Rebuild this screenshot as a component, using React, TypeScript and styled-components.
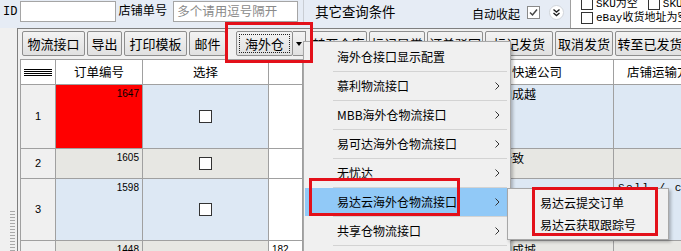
import React from "react";
import styled, { createGlobalStyle } from "styled-components";

const CJK = `"Noto Sans CJK SC", "Noto Sans", "Liberation Sans", sans-serif`;

const GlobalStyle = createGlobalStyle`
  html, body { margin: 0; padding: 0; background: #fff; overflow: hidden; }
  body { font-family: ${CJK}; font-size: 12px; color: #000; }
  * { box-sizing: border-box; }
`;

const Root = styled.div`
  position: relative;
  width: 681px;
  height: 251px;
  overflow: hidden;
  display: flex;
  flex-direction: column;
  background: #f0f0f0;
`;

/* ---------- top search bar ---------- */
const TopBar = styled.div`
  height: 28px;
  flex: none;
  display: flex;
  align-items: flex-start;
  background: #e6ecf5;
`;

const IdLabel = styled.span`
  font-family: "Liberation Mono", monospace;
  font-size: 12px;
  line-height: 1;
  padding: 6px 0 0 3px;
`;

const TextBox = styled.div<{ $w: number; $ml: number }>`
  width: ${(p) => p.$w}px;
  height: 21px;
  margin: 1px 0 0 ${(p) => p.$ml}px;
  background: #fff;
  border: 1px solid #a5a5a5;
  display: flex;
  align-items: center;
  padding-left: 3px;
  color: #8a8a8a;
  font-size: 12.5px;
  line-height: 1;
  white-space: nowrap;
  overflow: hidden;
`;

const BarLabel = styled.span<{ $ml: number; $fs: number }>`
  margin-left: ${(p) => p.$ml}px;
  padding-top: 4px;
  font-size: ${(p) => p.$fs}px;
  line-height: 1.1;
  white-space: nowrap;
`;

const BarSep = styled.div`
  width: 1px;
  height: 24px;
  margin-left: 5px;
  background: #c9cdd3;
`;

const AutoGroup = styled.div`
  margin-left: auto;
  display: flex;
  align-items: center;
  gap: 0;
  height: 24px;
`;

const Spacer = styled.div<{ $w: number }>`
  width: ${(p) => p.$w}px;
  flex: none;
`;

const CheckBoxBox = styled.div<{ $size: number; $border: string }>`
  width: ${(p) => p.$size}px;
  height: ${(p) => p.$size}px;
  flex: none;
  border: 1px solid ${(p) => p.$border};
  background: #fff;
  display: flex;
  align-items: center;
  justify-content: center;
`;

const TopRight = styled.div`
  width: 111px;
  height: 28px;
  margin-left: 6px;
  background: #fff;
  border-left: 1px solid #a0a0a0;
  overflow: hidden;
  flex: none;
`;

const TopRightRows = styled.div`
  margin-top: -3px;
  display: flex;
  flex-direction: column;
`;

const TopRightRow = styled.div`
  height: 14px;
  display: flex;
  align-items: center;
  padding-left: 10px;
  white-space: nowrap;
`;

const OptText = styled.span<{ $mr?: number }>`
  margin-left: 3px;
  margin-right: ${(p) => p.$mr ?? 0}px;
  font-family: "Liberation Mono", "Noto Sans CJK SC", monospace;
  font-size: 11px;
  line-height: 1;
`;

/* ---------- main ---------- */
const Main = styled.div`
  flex: 1;
  display: flex;
  min-height: 0;
`;

const LeftStrip = styled.div`
  width: 17px;
  flex: none;
  background: #f0f0f0;
  display: flex;
  flex-direction: column;
  align-items: flex-end;
  padding-right: 2px;
`;

const Grip = styled.div`
  width: 5px;
  height: 60px;
  margin-top: 182px;
  background-image: radial-gradient(circle, #a9a9a9 45%, transparent 50%);
  background-size: 2.5px 3px;
`;

const Panel = styled.div`
  flex: 1;
  min-width: 0;
  display: flex;
  flex-direction: column;
  border-top: 1px solid #7f7f7f;
  border-left: 1px solid #7f7f7f;
  background: #f0f0f0;
  padding-left: 2px;
`;

const Toolbar = styled.div`
  height: 30px;
  flex: none;
  display: flex;
  gap: 2px;
  padding: 2px 0 0 2px;
`;

const ToolButton = styled.div<{ $w: number; $ml?: number }>`
  width: ${(p) => p.$w}px;
  height: 25px;
  flex: none;
  margin-left: ${(p) => p.$ml ?? 0}px;
  display: flex;
  align-items: center;
  justify-content: center;
  border: 1px solid #8e8e8e;
  border-radius: 2px;
  background: linear-gradient(#f3f3f3, #e0e0e0);
  font-family: ${CJK};
  font-size: 13px;
  line-height: 1;
  white-space: nowrap;
`;

const SplitGroup = styled.div`
  display: flex;
  margin-left: 8px;
`;

const FocusRect = styled.span`
  display: flex;
  align-items: center;
  justify-content: center;
  width: 51px;
  height: 19px;
  border: 1px dotted #222;
`;

const ArrowPart = styled.div`
  width: 13px;
  height: 25px;
  border: 1px solid #8e8e8e;
  border-left: none;
  background: linear-gradient(#f3f3f3, #e0e0e0);
  display: flex;
  align-items: center;
  justify-content: center;
`;

const DownTri = styled.span`
  width: 0;
  height: 0;
  border-left: 3.5px solid transparent;
  border-right: 3.5px solid transparent;
  border-top: 4px solid #000;
`;

/* ---------- grid ---------- */
const Grid = styled.div`
  display: grid;
  grid-template-columns: 35px 87px 126px 34px 158px 153px 110px;
  grid-template-rows: 25px 64px 30px 62px 40px;
  border-top: 1px solid #a0a0a0;
  border-left: 1px solid #a0a0a0;
  background: #fff;
`;

type HAlign = "left" | "center" | "right";
const Cell = styled.div<{ $bg?: string; $h?: HAlign; $top?: boolean }>`
  border-right: 1px solid #a0a0a0;
  border-bottom: 1px solid #a0a0a0;
  background: ${(p) => p.$bg ?? "#fff"};
  display: flex;
  justify-content: ${(p) =>
    p.$h === "left" ? "flex-start" : p.$h === "right" ? "flex-end" : "center"};
  align-items: ${(p) => (p.$top ? "flex-start" : "center")};
  padding: 2px 3px;
  overflow: hidden;
  white-space: nowrap;
  font-size: 12px;
  line-height: 1.1;
`;

const HeadText = styled.span<{ $ml?: number }>`
  font-size: 12.5px;
  margin-left: ${(p) => p.$ml ?? 0}px;
`;

const NumText = styled.span`
  font-family: "Liberation Sans", sans-serif;
  font-size: 10px;
  line-height: 1;
  padding-top: 2px;
`;

const RowNum = styled.span`
  font-family: "Liberation Sans", sans-serif;
  font-size: 11px;
`;

const LinesIcon = styled.div`
  width: 28px;
  height: 7px;
  background: repeating-linear-gradient(#000 0 1px, #777 1px 1.5px, transparent 1.5px 2px);
`;

const MonoText = styled.span`
  font-family: "Liberation Mono", monospace;
  font-size: 11px;
  letter-spacing: 1.5px;
  padding: 1px 0 0 1px;
`;

/* ---------- popup menus ---------- */
const Menu = styled.div`
  position: absolute;
  left: 303px;
  top: 41px;
  width: 208px;
  background: #f0f0f0;
  border: 1px solid #a7a7a7;
  padding: 1px;
  box-shadow: 2px 2px 3px rgba(0, 0, 0, 0.25);
  font-family: ${CJK};
  font-size: 12px;
`;

const MenuItem = styled.div<{ $active?: boolean }>`
  height: 28px;
  display: flex;
  align-items: center;
  padding: 0 9px 0 32px;
  background: ${(p) => (p.$active ? "#91c9f7" : "transparent")};
  white-space: nowrap;
  line-height: 1;
`;

const MenuLabel = styled.span`
  flex: 1;
`;

const MenuSep = styled.div`
  height: 1px;
  margin: 0 2px 0 28px;
  background: #d3d3d3;
`;

const SubMenu = styled.div`
  position: absolute;
  left: 507px;
  top: 188px;
  width: 162px;
  padding: 3px 0;
  background: #f0f0f0;
  border: 1px solid #a7a7a7;
  box-shadow: 2px 2px 3px rgba(0, 0, 0, 0.25);
  font-family: ${CJK};
  font-size: 12px;
`;

const SubItem = styled.div`
  height: 22px;
  display: flex;
  align-items: center;
  padding-left: 32px;
  line-height: 1;
  white-space: nowrap;
`;

const RedBox = styled.div<{ $x: number; $y: number; $w: number; $h: number }>`
  position: absolute;
  left: ${(p) => p.$x}px;
  top: ${(p) => p.$y}px;
  width: ${(p) => p.$w}px;
  height: ${(p) => p.$h}px;
  border: 3px solid #e3101a;
  pointer-events: none;
`;

/* ---------- small drawings ---------- */
const Chevron = () => (
  <svg width="5" height="8" viewBox="0 0 5 8">
    <polyline points="0.5,0.5 4,4 0.5,7.5" fill="none" stroke="#333" strokeWidth="1" />
  </svg>
);

const CheckMark = () => (
  <svg width="11" height="11" viewBox="0 0 11 11">
    <polyline points="2,5.5 4.5,8 9,2.5" fill="none" stroke="#444" strokeWidth="1.5" />
  </svg>
);

const CollapseIcon = () => (
  <svg width="15" height="15" viewBox="0 0 15 15">
    <circle cx="7.5" cy="7.5" r="7" fill="#fff" stroke="#d0d4da" />
    <polyline points="4.5,4.5 7.5,7 10.5,4.5" fill="none" stroke="#222" strokeWidth="1.4" />
    <polyline points="4.5,8 7.5,10.5 10.5,8" fill="none" stroke="#222" strokeWidth="1.4" />
  </svg>
);

const BLUE = "#dde8f4";
const GRAY = "#e7e7e3";
const ROWHEAD = "#f0f0f0";

type Row = {
  n: string;
  id: string;
  idBg?: string;
  bg: string;
  c3?: string;
  c6?: string;
  c7?: string;
};

const rows: Row[] = [
  { n: "1", id: "1647", idBg: "#ff0000", bg: BLUE, c6: "四川省内成越" },
  { n: "2", id: "1605", bg: GRAY, c6: "运单号一致" },
  { n: "3", id: "1598", bg: BLUE, c7: "Sell / c" },
  { n: "4", id: "1448", bg: GRAY, c3: "182", c6: "四川省内成城" },
];

const toolButtons: { label: string; w: number }[] = [
  { label: "转至仓库", w: 57 },
  { label: "标记异常", w: 56 },
  { label: "订单驳回", w: 56 },
  { label: "标记发货", w: 68 },
  { label: "取消发货", w: 58 },
  { label: "转至已发货", w: 70 },
];

const menuItems: { label: string; sub: boolean; active?: boolean }[] = [
  { label: "海外仓接口显示配置", sub: false },
  { label: "慕利物流接口", sub: true },
  { label: "MBB海外仓物流接口", sub: true },
  { label: "易可达海外仓物流接口", sub: true },
  { label: "无忧达", sub: true },
  { label: "易达云海外仓物流接口", sub: true, active: true },
  { label: "共享仓物流接口", sub: true },
  { label: "其它海外仓接口", sub: true },
];

export default function App() {
  return (
    <>
      <GlobalStyle />
      <Root>
        <TopBar>
          <IdLabel>ID</IdLabel>
          <TextBox $w={96} $ml={3} />
          <BarLabel $ml={2} $fs={12.2}>店铺单号</BarLabel>
          <TextBox $w={125} $ml={6}>多个请用逗号隔开</TextBox>
          <BarSep />
          <BarLabel $ml={11} $fs={13.4}>其它查询条件</BarLabel>
          <AutoGroup>
            <BarLabel $ml={0} $fs={12}>自动收起</BarLabel>
            <Spacer $w={7} />
            <CheckBoxBox $size={13} $border="#8a8a8a">
              <CheckMark />
            </CheckBoxBox>
            <Spacer $w={9} />
            <CollapseIcon />
          </AutoGroup>
          <TopRight>
            <TopRightRows>
              <TopRightRow>
                <CheckBoxBox $size={12} $border="#333" />
                <OptText $mr={10}>SKU为空</OptText>
                <CheckBoxBox $size={12} $border="#333" />
                <OptText>SKU为空</OptText>
              </TopRightRow>
              <TopRightRow>
                <CheckBoxBox $size={12} $border="#333" />
                <OptText>eBay收货地址为空</OptText>
              </TopRightRow>
            </TopRightRows>
          </TopRight>
        </TopBar>

        <Main>
          <LeftStrip>
            <Grip />
          </LeftStrip>
          <Panel>
            <Toolbar>
              <ToolButton $w={63}>物流接口</ToolButton>
              <ToolButton $w={35}>导出</ToolButton>
              <ToolButton $w={63}>打印模板</ToolButton>
              <ToolButton $w={37}>邮件</ToolButton>
              <SplitGroup>
                <ToolButton $w={57}>
                  <FocusRect>海外仓</FocusRect>
                </ToolButton>
                <ArrowPart>
                  <DownTri />
                </ArrowPart>
              </SplitGroup>
              {toolButtons.map((b, i) => (
                <ToolButton key={b.label} $w={b.w} $ml={i === 0 ? 2 : 0}>
                  {b.label}
                </ToolButton>
              ))}
            </Toolbar>

            <Grid>
              <Cell>
                <LinesIcon />
              </Cell>
              <Cell>
                <HeadText>订单编号</HeadText>
              </Cell>
              <Cell>
                <HeadText>选择</HeadText>
              </Cell>
              <Cell />
              <Cell>
                <HeadText>收件人</HeadText>
              </Cell>
              <Cell>
                <HeadText>快递公司</HeadText>
              </Cell>
              <Cell $h="left">
                <HeadText $ml={10}>店铺运输方式</HeadText>
              </Cell>

              {rows.map((r) => (
                <React.Fragment key={r.n}>
                  <Cell $bg={ROWHEAD}>
                    <RowNum>{r.n}</RowNum>
                  </Cell>
                  <Cell $bg={r.idBg ?? r.bg} $h="right" $top>
                    <NumText>{r.id}</NumText>
                  </Cell>
                  <Cell $bg={r.bg}>
                    <CheckBoxBox $size={13} $border="#333" />
                  </Cell>
                  <Cell $h="left" $top>
                    <NumText>{r.c3 ?? ""}</NumText>
                  </Cell>
                  <Cell $bg={r.bg} />
                  <Cell $bg={r.bg} $h="left" $top>
                    {r.c6 ?? ""}
                  </Cell>
                  <Cell $bg={r.bg} $h="left" $top>
                    {r.c7 ? <MonoText>{r.c7}</MonoText> : null}
                  </Cell>
                </React.Fragment>
              ))}
            </Grid>
          </Panel>
        </Main>

        <Menu>
          {menuItems.map((m, i) => (
            <React.Fragment key={m.label}>
              <MenuItem $active={m.active}>
                <MenuLabel>{m.label}</MenuLabel>
                {m.sub ? <Chevron /> : null}
              </MenuItem>
              {i < menuItems.length - 1 ? <MenuSep /> : null}
            </React.Fragment>
          ))}
        </Menu>

        <SubMenu>
          <SubItem>易达云提交订单</SubItem>
          <SubItem>易达云获取跟踪号</SubItem>
        </SubMenu>

        <RedBox $x={225} $y={22} $w={88} $h={41} />
        <RedBox $x={309} $y={178} $w={151} $h={38} />
        <RedBox $x={532} $y={187} $w={126} $h={49} />
      </Root>
    </>
  );
}
